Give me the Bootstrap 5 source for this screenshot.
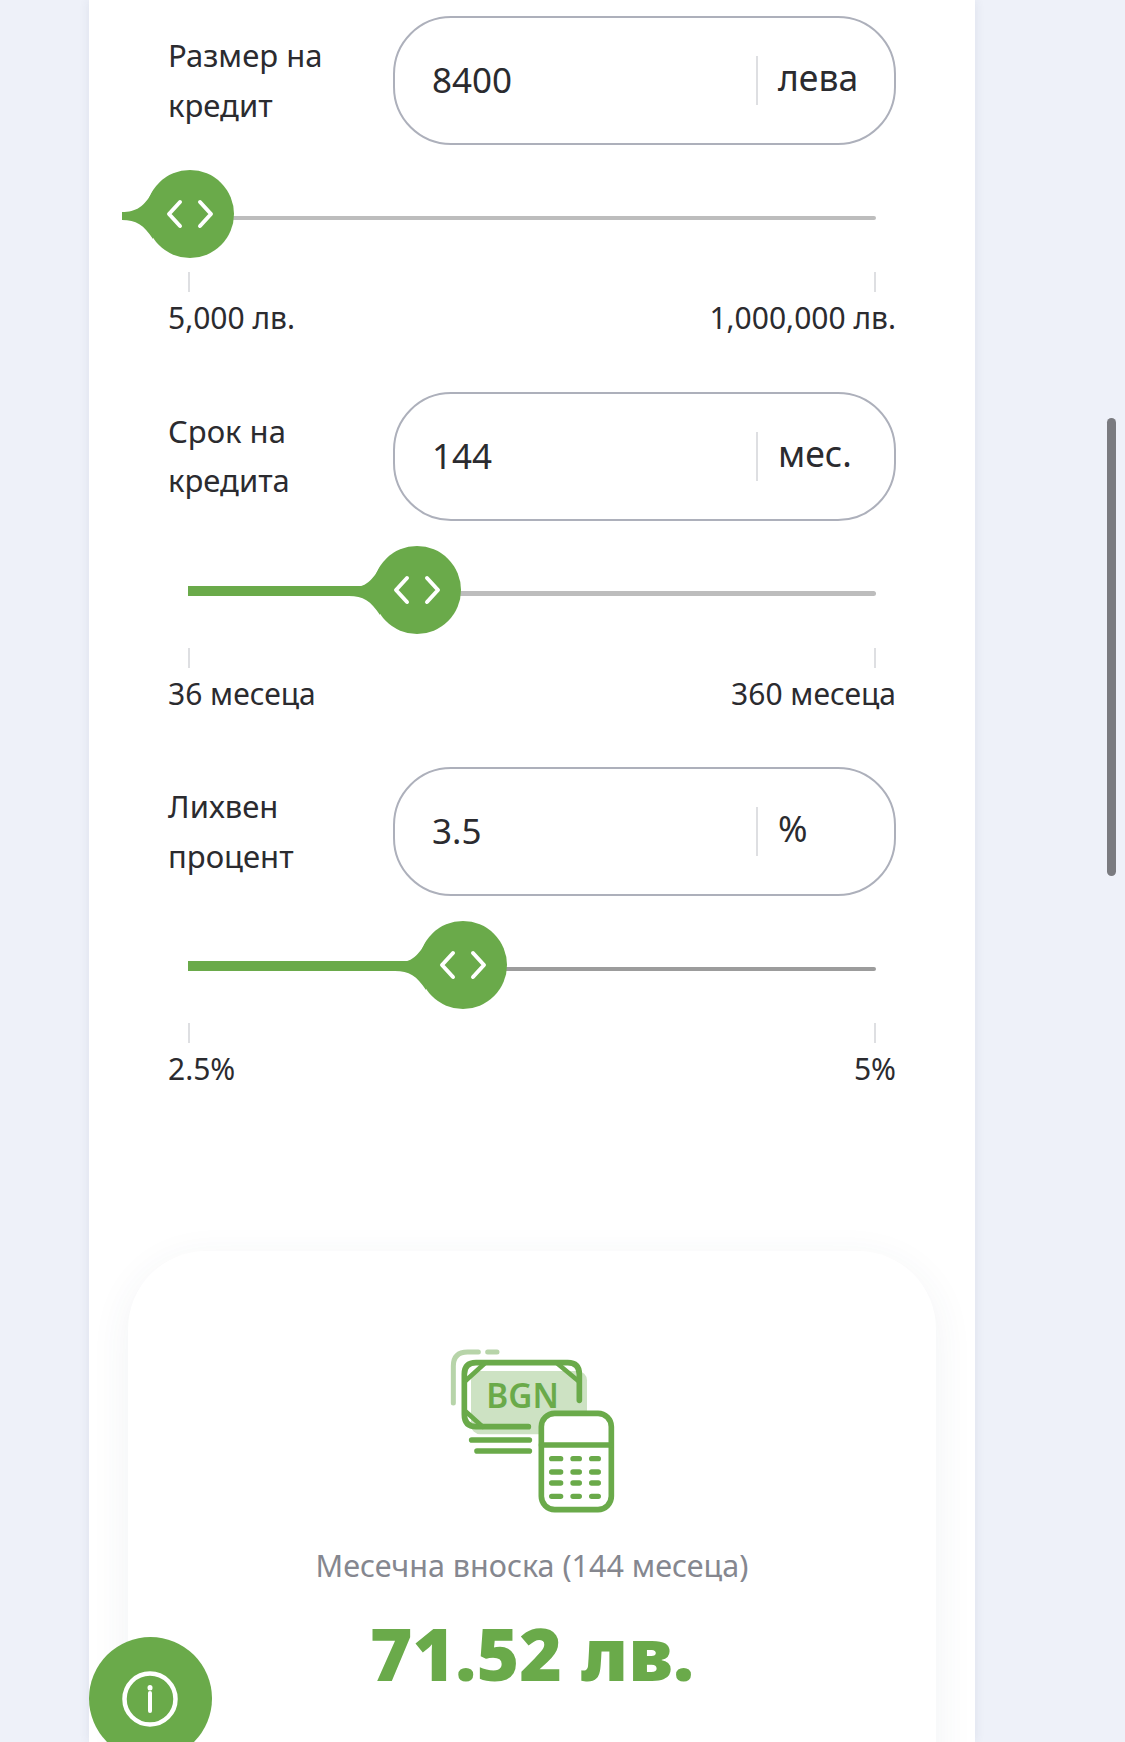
<!DOCTYPE html>
<html lang="bg">
<head>
  <meta charset="UTF-8" />
  <meta name="viewport" content="width=device-width, initial-scale=1.0"/>
  <title>Кредитен калкулатор</title>
  <link rel="stylesheet" href="https://cdn.jsdelivr.net/npm/bootstrap@5.3.0/dist/css/bootstrap.min.css" />
  <style>
    html, body { height: 1742px; overflow: hidden; }
    body { background: #eef1f9; font-family: "Noto Sans", "Liberation Sans", sans-serif; color: #2b2b2f; position: relative; }
    .calc-panel { width: 886px; height: 1742px; margin-left: 89px; padding: 16px 79px 0; background: #fff; box-shadow: 0 0 10px rgba(60, 70, 100, .09); overflow: hidden; }
    .calc-group { margin-bottom: 51.5px; }
    .calc-label { width: 225px; font-size: 31px; line-height: 49.5px; }
    .calc-pill { height: 129px; border: 2px solid #adb0bb; border-radius: 58px; }
    .calc-pill input { border: 0; background: none; box-shadow: none; padding: 0 0 2px 37px; font-size: 35px; color: #2b2b2f; height: 100%; }
    .calc-pill input:focus { box-shadow: none; }
    .calc-unit { width: 138px; height: 49px; padding-left: 20px; border-left: 2px solid #dedfe2; font-size: 35.5px; line-height: 42px; }
    .calc-slider { position: relative; height: 125px; margin: 0 20px; }
    .calc-track { position: absolute; left: 0; right: 0; top: 70.5px; height: 4.5px; border-radius: 3px; background: #bdbdbd; }
    .calc-track.dark { background: #9c9c9c; }
    .calc-fill { position: absolute; left: 0; top: 65px; height: 10px; background: #6aaa4a; }
    .calc-thumb { position: absolute; top: 24px; width: 136px; height: 90px; margin-left: -70px; }
    .calc-ticks { margin: 0 20px; height: 22px; }
    .calc-tick { width: 2px; height: 20px; margin-top: 2px; background: #dedfe2; }
    .calc-range { height: 44px; margin-top: 4px; font-size: 30px; line-height: 44px; }
    .result-card { width: 808px; height: 600px; margin: 160px 0 0 -40px; padding-top: 70px; border-radius: 78px; background: #fff; box-shadow: 0 10px 40px rgba(60, 70, 100, .07); }
    .result-icon { margin-left: 293px; }
    .result-label { margin-top: 22px; font-size: 30.5px; line-height: 44px; color: #85878f; }
    .result-value { margin-top: 21px; font-size: 73px; line-height: 90px; font-weight: 900; color: #6aaa4a; }
    .info-btn { position: absolute; left: 89px; top: 1637px; width: 123px; height: 123px; padding: 0; border: 0; border-radius: 50%; background: #6aaa4a; }
    .page-scroll { position: absolute; left: 1107px; top: 418px; width: 9px; height: 458px; border-radius: 5px; background: #7a7b80; }
  </style>
</head>
<body>
  <svg class="d-none">
    <symbol id="thumb" viewBox="0 0 136 90">
      <circle cx="70" cy="45" r="44" fill="#6aaa4a"/>
      <path d="M2 43C16 43 24 38 33 22V70C24 56 16 51 2 51Z" fill="#6aaa4a"/>
      <path d="M60 33L49 45L60 57M80 33L91 45L80 57" fill="none" stroke="#fff" stroke-width="4" stroke-linecap="round" stroke-linejoin="round"/>
    </symbol>
  </svg>

  <main class="calc-panel">
    <section class="calc-group">
      <div class="d-flex align-items-center">
        <label class="calc-label flex-shrink-0" for="amount">Размер на<br>кредит</label>
        <div class="calc-pill d-flex align-items-center flex-grow-1">
          <input id="amount" class="form-control" type="text" value="8400">
          <span class="calc-unit flex-shrink-0">лева</span>
        </div>
      </div>
      <div class="calc-slider">
        <div class="calc-track"></div>
        <svg class="calc-thumb" style="left: 0.34%"><use href="#thumb"/></svg>
      </div>
      <div class="calc-ticks d-flex justify-content-between"><i class="calc-tick"></i><i class="calc-tick"></i></div>
      <div class="calc-range d-flex justify-content-between"><span>5,000 лв.</span><span>1,000,000 лв.</span></div>
    </section>

    <section class="calc-group">
      <div class="d-flex align-items-center">
        <label class="calc-label flex-shrink-0" for="term">Срок на<br>кредита</label>
        <div class="calc-pill d-flex align-items-center flex-grow-1">
          <input id="term" class="form-control" type="text" value="144">
          <span class="calc-unit flex-shrink-0">мес.</span>
        </div>
      </div>
      <div class="calc-slider">
        <div class="calc-track"></div>
        <div class="calc-fill" style="width: 30%"></div>
        <svg class="calc-thumb" style="left: 33.33%"><use href="#thumb"/></svg>
      </div>
      <div class="calc-ticks d-flex justify-content-between"><i class="calc-tick"></i><i class="calc-tick"></i></div>
      <div class="calc-range d-flex justify-content-between"><span>36 месеца</span><span>360 месеца</span></div>
    </section>

    <section class="calc-group mb-0">
      <div class="d-flex align-items-center">
        <label class="calc-label flex-shrink-0" for="rate">Лихвен<br>процент</label>
        <div class="calc-pill d-flex align-items-center flex-grow-1">
          <input id="rate" class="form-control" type="text" value="3.5">
          <span class="calc-unit flex-shrink-0">%</span>
        </div>
      </div>
      <div class="calc-slider">
        <div class="calc-track dark"></div>
        <div class="calc-fill" style="width: 35%"></div>
        <svg class="calc-thumb" style="left: 40%"><use href="#thumb"/></svg>
      </div>
      <div class="calc-ticks d-flex justify-content-between"><i class="calc-tick"></i><i class="calc-tick"></i></div>
      <div class="calc-range d-flex justify-content-between"><span>2.5%</span><span>5%</span></div>
    </section>

    <section class="result-card text-center">
      <svg width="220" height="200" viewBox="0 0 660 600" class="result-icon d-block" fill="none" stroke-linecap="round" stroke-linejoin="round">
        <rect x="150" y="150" width="348" height="190" rx="28" fill="#cde2c3"/>
        <path d="M97 246V135Q97 93 140 93H172M200 93H228" stroke="#b7d4a9" stroke-width="15"/>
        <path d="M475 238V160Q475 125 440 125H165Q130 125 130 160V280Q130 317 165 317H322" stroke="#6aaa4a" stroke-width="17"/>
        <path d="M190 128L133 180M410 128L472 180M135 272L185 317" stroke="#6aaa4a" stroke-width="14"/>
        <path d="M152 357H325" stroke="#6aaa4a" stroke-width="17"/>
        <path d="M168 390H325" stroke="#6aaa4a" stroke-width="17"/>
        <text x="305" y="260" text-anchor="middle" font-family="Noto Sans, sans-serif" font-size="100" font-weight="600" fill="#6aaa4a">BGN</text>
        <rect x="361" y="277" width="210" height="289" rx="40" fill="#fff" stroke="#6aaa4a" stroke-width="17"/>
        <path d="M361 372H571" stroke="#6aaa4a" stroke-width="16"/>
        <path d="M392 413H419M456 413H475M512 413H532M392 453H419M456 453H475M512 453H532M392 486H419M456 486H475M512 486H532M392 526H419M456 526H475M512 526H532" stroke="#6aaa4a" stroke-width="16"/>
      </svg>
      <div class="result-label">Месечна вноска (144 месеца)</div>
      <div class="result-value">71.52 лв.</div>
    </section>
  </main>

  <button class="info-btn" type="button" aria-label="Информация">
    <svg class="d-block" width="123" height="123" viewBox="0 0 123 123" fill="none" stroke="#fff" stroke-linecap="round">
      <circle cx="61" cy="62" r="25.500" stroke-width="4.500"/>
      <path d="M61 56V74" stroke-width="4"/>
      <path d="M61 50.500V51" stroke-width="5"/>
    </svg>
  </button>
  <div class="page-scroll"></div>

  <script src="https://cdn.jsdelivr.net/npm/bootstrap@5.3.0/dist/js/bootstrap.bundle.min.js"></script>
</body>
</html>
